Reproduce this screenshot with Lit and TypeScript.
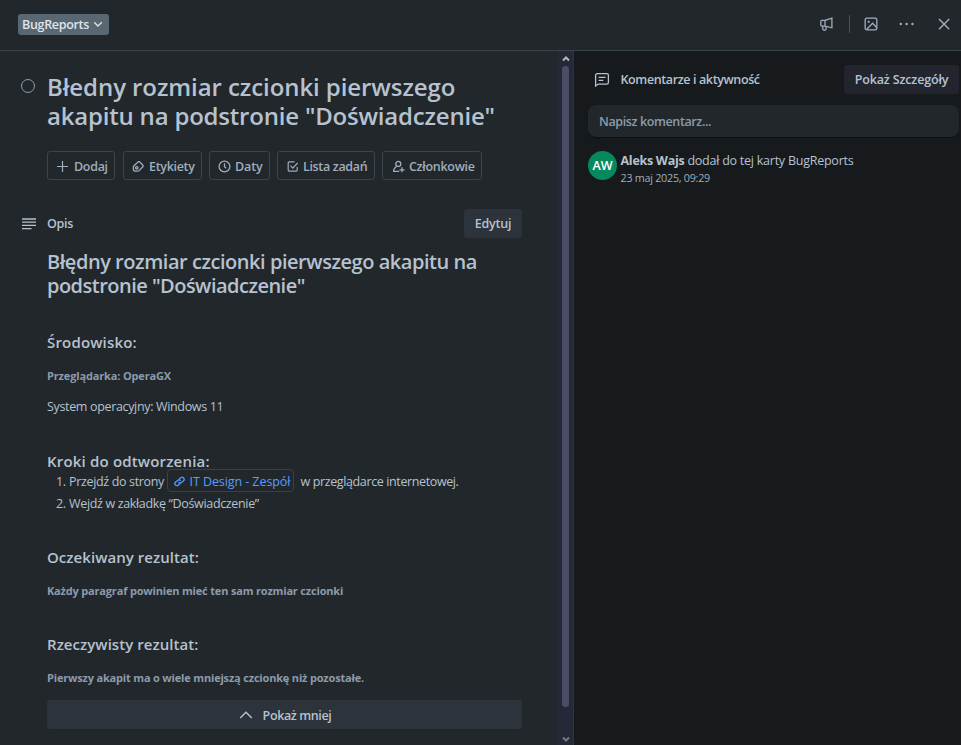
import { LitElement, html, css, svg } from "lit";
import { customElement } from "lit/decorators.js";

const icon = (cls: string, w: number, h: number, body: unknown) =>
  html`<svg class=${cls} width=${w} height=${h} viewBox="0 0 ${w} ${h}" fill="none" stroke="currentColor" stroke-width="1.3">${body}</svg>`;

const icons = {
  chevronDown: icon("", 10, 10, svg`<path d="M1.200 3.200L5 7l3.800-3.800"/>`),
  chevronUp: icon("", 14, 10, svg`<path d="M1.200 8L7 2.200 12.800 8" stroke-width="1.400"/>`),
  megaphone: icon("", 16, 16, svg`<path d="M6 4.400L12.900 2.200V11.800L6 10.200M1.800 5.600q0-1.200 1.200-1.200H6v5.800H3q-1.200 0-1.200-1.200zM3.700 10.200v2.400a1.700 1.700 0 003.400 0V10.600"/>`),
  image: icon("", 16, 16, svg`<rect x="2.150" y="2.150" width="11.700" height="11.700" rx="1.600"/><circle cx="5.700" cy="5.800" r="1.150" fill="currentColor" stroke="none"/><path d="M3.600 13.500L9.600 7.300l4 4.200"/>`),
  dots: icon("", 16, 16, svg`<g fill="currentColor" stroke="none"><circle cx="1.800" cy="8" r="1.200"/><circle cx="7.600" cy="8" r="1.200"/><circle cx="13.500" cy="8" r="1.200"/></g>`),
  close: icon("", 16, 16, svg`<path d="M3 3l10.200 10.200M13.200 3L3 13.200" stroke-width="1.400"/>`),
  plus: icon("", 13, 13, svg`<path d="M6.500 1v11M1 6.500h11" stroke-width="1.200"/>`),
  tag: icon("", 13, 13, svg`<path d="M6.500 1.600h.8L11 5.300q.5.600 0 1.200L7.200 10.600q-.6.600-1.400.6H3.400q-2 0-2-2V7.200q0-.8.600-1.400z"/><circle cx="4.800" cy="7.800" r="1.200"/>`),
  clock: icon("", 13, 13, svg`<circle cx="6.500" cy="6.500" r="5.400"/><path d="M6.500 3.200v3.500l1.700 1.500"/>`),
  check: icon("", 13, 13, svg`<path d="M8.500 1.900H3.200q-1 0-1 1v7.200q0 1 1 1h7q1 0 1-1V7M4.400 5.600l2.400 2.500L11.600 3" stroke-width="1.200"/>`),
  member: icon("", 13, 13, svg`<circle cx="6.300" cy="3.900" r="2.500"/><path d="M4.700 6.200C2.800 7.400 1.600 9 1.600 11.400h5.600M10 7.300v5M7.500 9.800h5"/>`),
  lines: icon("", 14, 12, svg`<path d="M0 1h14M0 4.200h14M0 7.400h14M0 10.600h9.500"/>`),
  comment: icon("", 16, 16, svg`<path d="M1.600 14V3.300q0-1.600 1.600-1.600h9.600q1.600 0 1.600 1.600v7.200q0 1.600-1.600 1.600H4.200zM4.600 5.400h7M4.600 8.300h4.800"/>`),
  link: icon("", 13, 13, svg`<g stroke-width="1.200" transform="rotate(-38 6.500 6.500)"><path d="M5.900 8.700H3.200a2.100 2.100 0 010-4.200h2.400q1.900 0 2.300 2.200M7.100 4.300H9.800a2.100 2.100 0 010 4.200H7.400q-1.900 0-2.300-2.200"/></g>`),
};

const actions = [
  { id: "add", label: "Dodaj", glyph: icons.plus },
  { id: "labels", label: "Etykiety", glyph: icons.tag },
  { id: "dates", label: "Daty", glyph: icons.clock },
  { id: "checklist", label: "Lista zadań", glyph: icons.check },
  { id: "members", label: "Członkowie", glyph: icons.member },
];

@customElement("app-root")
export class AppRoot extends LitElement {
  static styles = css`
    :host {
      display: flex; flex-direction: column; height: 745px; overflow: hidden;
      background: #22272b; color: #b6c2cf;
      font: 400 12.5px "Open Sans", "Noto Sans", sans-serif;
    }
    * { box-sizing: border-box; }
    svg { display: block; flex: none; }
    h1, h2, h3, h4, h5, p, ol { margin: 0; padding: 0; }
    button { font: inherit; color: inherit; border: 0; padding: 0; margin: 0; white-space: nowrap; }
    header { display: flex; justify-content: space-between; align-items: center; height: 51px; padding: 0 9px 2px 18px; border-bottom: 1px solid #39444a; flex: none; }
    .list { display: flex; align-items: center; gap: 4px; width: 91px; height: 21px; padding: 0 0 0 4px; border-radius: 3px; background: #596773; color: #dee4ea; font-weight: 600; letter-spacing: -0.31px; }
    .tools { display: flex; align-items: center; color: #9fadbc; }
    .sep { width: 1px; height: 18px; margin: 0 13px 0 14px; background: #454f59; }
    .tools .dots { margin: 0 21px 0 20px; }
    .megaphone { margin-right: 1px; }
    .body { display: flex; flex: 1; min-height: 0; }
    .card { width: 558px; padding: 21px 36px 0 21px; }
    .row { display: grid; grid-template-columns: 26px 475px; }
    .ring { width: 14px; height: 14px; margin-top: 7px; border: 1px solid #8c9bab; border-radius: 50%; }
    .title { font-size: 24px; line-height: 29px; font-weight: 600; letter-spacing: -0.08px; white-space: nowrap; }
    .title .second { letter-spacing: -0.2px; }
    .actions { display: flex; width: 436px; margin: 21px 0 0 26px; }
    .action { display: flex; align-items: center; gap: 4px; height: 29px; padding: 1px 0 0 8px; margin-right: 7px; border: 1px solid #3b444c; border-radius: 3px; background: transparent; color: #9fadbc; font-weight: 600; }
    .add { width: 68px; margin-right: 8px; letter-spacing: -0.3px; gap: 5px; }
    .labels { width: 79px; letter-spacing: -0.32px; }
    .dates { width: 61px; letter-spacing: -0.1px; gap: 4px; }
    .checklist { width: 98px; letter-spacing: -0.34px; gap: 4px; }
    .members { width: 100px; margin-right: 0; padding-left: 9px; letter-spacing: -0.3px; }
    .section { margin-top: 29px; align-items: center; }
    .section > svg { margin-left: 1px; }
    .sectionhead { display: flex; justify-content: space-between; align-items: center; }
    .label { font-size: 12.5px; font-weight: 600; letter-spacing: -0.25px; }
    .edit { width: 58px; height: 29px; border-radius: 3px; background: #2c333a; font-weight: 600; letter-spacing: -0.25px; }
    .desc { margin: 12px 0 0 26px; width: 475px; white-space: nowrap; }
    .desc h2 { font-size: 20px; line-height: 24px; font-weight: 600; letter-spacing: -0.46px; }
    .desc .second { letter-spacing: -0.52px; }
    .desc h3 { font-size: 15px; line-height: 18px; font-weight: 600; letter-spacing: 0.05px; }
    .desc .env { margin-top: 35px; letter-spacing: 0.17px; }
    .desc .steps { margin-top: 35px; letter-spacing: 0.18px; }
    .desc .expected { margin-top: 33px; }
    .desc .actual { margin-top: 36px; }
    .desc h5 { margin-top: 17px; font-size: 11px; line-height: 16px; font-weight: 700; letter-spacing: -0.18px; color: #8c9bab; }
    .desc .browser { letter-spacing: -0.15px; }
    .desc p { margin-top: 13px; line-height: 20px; letter-spacing: -0.34px; }
    ol { list-style: none; padding-top: 1px; }
    li { display: flex; align-items: center; height: 22px; line-height: 22px; letter-spacing: -0.34px; }
    .num { width: 22px; padding-left: 9px; }
    .chip { display: flex; align-items: center; gap: 4px; width: 127px; height: 23px; margin: -3px 7px 0 2.500px; padding: 2px 0 0 5px; border: 1px solid #38414a; border-radius: 4px; color: #579dff; letter-spacing: -0.08px; }
    .tail { letter-spacing: -0.38px; }
    .less { display: flex; align-items: center; justify-content: center; gap: 10px; width: 475px; height: 29px; margin: 14px 0 0 26px; padding: 1px 0 0 1px; border-radius: 3px; background: #2c333a; font-weight: 600; letter-spacing: -0.38px; }
    .scroll { display: flex; flex-direction: column; align-items: center; justify-content: space-between; width: 15px; padding: 4px 0 2px; background: #252836; color: #b8b8b8; }
    .thumb { width: 7px; height: 641px; margin: 3px 0 auto; border-radius: 4px; background: #4b4d66; }
    .scroll .down { color: #77777c; }
    aside { flex: 1; border-left: 1px solid #2e353b; background: #161a1d; padding: 14px 2px 0 14px; }
    .asidehead { display: flex; align-items: center; height: 29px; padding-left: 6px; }
    .asidehead .label { margin-left: 10.500px; letter-spacing: -0.38px; }
    .details { width: 115px; height: 29px; margin-left: auto; border-radius: 3px; background: #22252d; font-weight: 600; letter-spacing: -0.16px; }
    .input { display: flex; align-items: center; height: 32px; margin-top: 11px; padding-left: 11px; border-radius: 8px; background: #22272b; box-shadow: 0 1px 1px #0d1013; color: #8c9bab; font-weight: 600; letter-spacing: -0.38px; }
    .activity { display: flex; gap: 3.500px; margin-top: 14px; white-space: nowrap; }
    .avatar { display: flex; align-items: center; justify-content: center; width: 29px; height: 29px; border-radius: 50%; background: #058a5e; color: #fff; font-weight: 600; font-size: 12.500px; }
    .what { padding-top: 1px; line-height: 18px; letter-spacing: -0.24px; }
    .what b { letter-spacing: -0.28px; }
    .when { font-size: 10.8px; line-height: 16px; letter-spacing: -0.28px; color: #9fadbc; }
  `;

  render() {
    return html`
      <header>
        <button class="list">BugReports ${icons.chevronDown}</button>
        <div class="tools">
          ${icons.megaphone}<span class="sep"></span>${icons.image}
          <span class="dots">${icons.dots}</span>${icons.close}
        </div>
      </header>
      <div class="body">
        <main class="card">
          <div class="row">
            <span class="ring"></span>
            <h1 class="title">Błedny rozmiar czcionki pierwszego<br /><span class="second">akapitu na podstronie "Doświadczenie"</span></h1>
          </div>
          <div class="actions">
            ${actions.map((a) => html`<button class="action ${a.id}">${a.glyph}<span>${a.label}</span></button>`)}
          </div>
          <div class="row section">
            ${icons.lines}
            <div class="sectionhead">
              <h3 class="label">Opis</h3>
              <button class="edit">Edytuj</button>
            </div>
          </div>
          <article class="desc">
            <h2>Błędny rozmiar czcionki pierwszego akapitu na<br /><span class="second">podstronie "Doświadczenie"</span></h2>
            <h3 class="env">Środowisko:</h3>
            <h5 class="browser">Przeglądarka: OperaGX</h5>
            <p>System operacyjny: Windows 11</p>
            <h3 class="steps">Kroki do odtworzenia:</h3>
            <ol>
              <li><span class="num">1.</span>Przejdź do strony<a class="chip">${icons.link}IT Design - Zespół</a><span class="tail">w przeglądarce internetowej.</span></li>
              <li><span class="num">2.</span>Wejdź w zakładkę “Doświadczenie”</li>
            </ol>
            <h3 class="expected">Oczekiwany rezultat:</h3>
            <h5>Każdy paragraf powinien mieć ten sam rozmiar czcionki</h5>
            <h3 class="actual">Rzeczywisty rezultat:</h3>
            <h5>Pierwszy akapit ma o wiele mniejszą czcionkę niż pozostałe.</h5>
          </article>
          <button class="less">${icons.chevronUp}Pokaż mniej</button>
        </main>
        <div class="scroll">
          ${icon("", 8, 8, svg`<path d="M1 5.500L4 2.500l3 3" stroke-width="2"/>`)}
          <span class="thumb"></span>
          ${icon("down", 8, 8, svg`<path d="M1 2.500l3 3 3-3" stroke-width="2"/>`)}
        </div>
        <aside>
          <div class="asidehead">
            ${icons.comment}
            <h3 class="label">Komentarze i aktywność</h3>
            <button class="details">Pokaż Szczegóły</button>
          </div>
          <div class="input">Napisz komentarz...</div>
          <div class="activity">
            <span class="avatar">AW</span>
            <div>
              <div class="what"><b>Aleks Wajs</b> dodał do tej karty BugReports</div>
              <div class="when">23 maj 2025, 09:29</div>
            </div>
          </div>
        </aside>
      </div>
    `;
  }
}
